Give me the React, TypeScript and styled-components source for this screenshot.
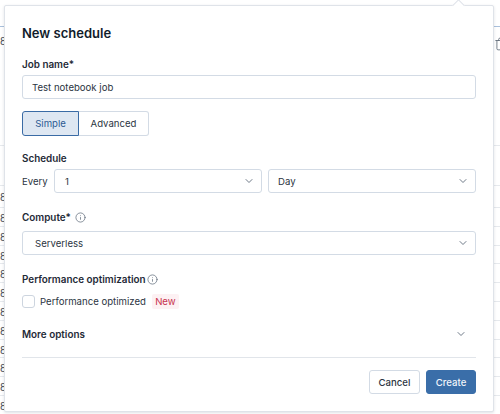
import { createGlobalStyle, styled } from "styled-components";
import { ChevronDown, Info, Trash } from "lucide-react";

const GlobalStyle = createGlobalStyle`
  html, body {
    margin: 0;
    padding: 0;
    background: #fff;
  }
  * {
    box-sizing: border-box;
  }
`;

const Page = styled.div`
  width: 500px;
  height: 414px;
  position: relative;
  overflow: hidden;
  background: #fff;
  font-family: Inter, "Liberation Sans", sans-serif;
  color: #2b3542;
`;

const Backdrop = styled.div`
  height: 100%;
  display: flex;
  flex-direction: column;
  overflow: hidden;
`;

const Band = styled.div<{ $h: number; $line?: string; $pad?: number }>`
  flex: none;
  height: ${(p) => p.$h}px;
  padding-top: ${(p) => p.$pad ?? 4}px;
  font-size: 10px;
  line-height: 12px;
  color: #3d4854;
  border-bottom: 1px solid ${(p) => p.$line ?? "#e6e9ed"};
`;

const TrashMark = styled.div`
  position: absolute;
  top: 35px;
  left: 494px;
  color: #5b6673;
`;

const Popover = styled.div`
  position: absolute;
  top: 5px;
  left: 4px;
  width: 490px;
  height: 407px;
  padding: 17px 17px 0;
  background: #fff;
  border: 1px solid #dfe3e9;
  border-radius: 2px;
  box-shadow: 0 1px 3px rgba(30, 45, 70, 0.14);
  display: flex;
  flex-direction: column;
`;

const Arrow = styled.div`
  position: absolute;
  top: -5px;
  right: 30px;
  width: 9px;
  height: 9px;
  background: #fff;
  border-top: 1px solid #dfe3e9;
  border-left: 1px solid #dfe3e9;
  transform: rotate(45deg);
`;

const Title = styled.h2`
  margin: 0 0 13px;
  font-size: 13px;
  line-height: 20px;
  font-weight: 600;
  color: #111c2b;
`;

const Label = styled.div<{ $gap?: number }>`
  display: flex;
  align-items: center;
  gap: ${(p) => p.$gap ?? 0}px;
  height: 16px;
  font-size: 9.9px;
  line-height: 16px;
  font-weight: 600;
  color: #1f2a37;
`;

const Field = styled.div<{ $mb: number; $gap: number }>`
  display: flex;
  flex-direction: column;
  gap: ${(p) => p.$gap}px;
  margin-bottom: ${(p) => p.$mb}px;
`;

const Input = styled.div`
  height: 24px;
  padding: 0 9px;
  display: flex;
  align-items: center;
  font-size: 9.6px;
  background: #fff;
  border: 1px solid #d3dbe5;
  border-radius: 3px;
`;

const Segmented = styled.div`
  display: flex;
  flex: none;
  height: 25px;
  margin-bottom: 14px;
`;

const Segment = styled.div<{ $active?: boolean; $w: number }>`
  width: ${(p) => p.$w}px;
  display: flex;
  align-items: center;
  justify-content: center;
  font-size: 9.6px;
  color: ${(p) => (p.$active ? "#2c5a92" : "#2b3542")};
  background: ${(p) => (p.$active ? "#dee7f2" : "#fff")};
  border: 1px solid ${(p) => (p.$active ? "#3a6ba5" : "#d3dbe5")};
  border-left-width: ${(p) => (p.$active ? 1 : 0)}px;
  border-radius: ${(p) => (p.$active ? "3px 0 0 3px" : "0 3px 3px 0")};
`;

const Row = styled.div`
  display: flex;
  align-items: center;
  font-size: 9.6px;
`;

const Every = styled.span`
  flex: none;
  width: 32px;
`;

const SelectPair = styled.div`
  flex: 1;
  display: grid;
  grid-template-columns: 1fr 1fr;
  column-gap: 6px;
`;

const Select = styled.div<{ $pl?: number }>`
  height: 24px;
  padding: 0 6px 0 ${(p) => p.$pl ?? 9}px;
  display: flex;
  align-items: center;
  justify-content: space-between;
  font-size: 9.6px;
  background: #fff;
  border: 1px solid #d3dbe5;
  border-radius: 3px;
`;

const Checkbox = styled.span`
  flex: none;
  width: 13px;
  height: 13px;
  margin-right: 5px;
  border: 1px solid #cdd5df;
  border-radius: 3px;
`;

const NewTag = styled.span`
  margin-left: 6px;
  width: 27px;
  height: 15px;
  line-height: 15px;
  text-align: center;
  color: #c8324f;
  background: #fdf1f3;
  border-radius: 2px;
`;

const More = styled.div`
  display: flex;
  align-items: center;
  justify-content: space-between;
  padding-right: 9px;
  margin-bottom: 15px;
`;

const Divider = styled.hr`
  flex: none;
  width: 100%;
  margin: 0 0 12px;
  border: 0;
  border-top: 1px solid #e1e5ea;
`;

const Footer = styled.div`
  display: flex;
  justify-content: flex-end;
  gap: 6px;
`;

const Button = styled.button<{ $primary?: boolean }>`
  width: ${(p) => (p.$primary ? 50 : 51)}px;
  height: 24px;
  padding: 0;
  font-family: inherit;
  font-size: 9.6px;
  font-weight: 500;
  color: ${(p) => (p.$primary ? "#f2f6fb" : "#2b3542")};
  background: ${(p) => (p.$primary ? "#3a6ea9" : "#fff")};
  border: 1px solid ${(p) => (p.$primary ? "#3a6ea9" : "#d3dbe5")};
  border-radius: 3px;
`;

const chevron = <ChevronDown size={12} strokeWidth={1.8} color="#5f6b7a" />;
const info = <Info size={11} strokeWidth={1.6} color="#5f6b7a" />;

export default function App() {
  return (
    <Page>
      <GlobalStyle />
      <Backdrop>
        <Band $h={27} $line="#a9c0dc" />
        <Band $h={119} $pad={8}>8</Band>
        <Band $h={40} />
        <Band $h={22} $pad={5}>8</Band>
        {Array.from({ length: 11 }, (_, i) => (
          <Band key={i} $h={18.8}>8</Band>
        ))}
      </Backdrop>
      <TrashMark>
        <Trash size={14} strokeWidth={1.4} />
      </TrashMark>
      <Popover>
        <Arrow />
        <Title>New schedule</Title>
        <Field $mb={12} $gap={3}>
          <Label>Job name*</Label>
          <Input>Test notebook job</Input>
        </Field>
        <Segmented>
          <Segment $active $w={57}>Simple</Segment>
          <Segment $w={70}>Advanced</Segment>
        </Segmented>
        <Field $mb={16} $gap={3}>
          <Label>Schedule</Label>
          <Row>
            <Every>Every</Every>
            <SelectPair>
              <Select $pl={10}>1{chevron}</Select>
              <Select>Day{chevron}</Select>
            </SelectPair>
          </Row>
        </Field>
        <Field $mb={16} $gap={6}>
          <Label $gap={4}>Compute*{info}</Label>
          <Select $pl={12}>Serverless{chevron}</Select>
        </Field>
        <Field $mb={17} $gap={7}>
          <Label $gap={1}>Performance optimization{info}</Label>
          <Row>
            <Checkbox />
            Performance optimized
            <NewTag>New</NewTag>
          </Row>
        </Field>
        <More>
          <Label>More options</Label>
          {chevron}
        </More>
        <Divider />
        <Footer>
          <Button>Cancel</Button>
          <Button $primary>Create</Button>
        </Footer>
      </Popover>
    </Page>
  );
}
